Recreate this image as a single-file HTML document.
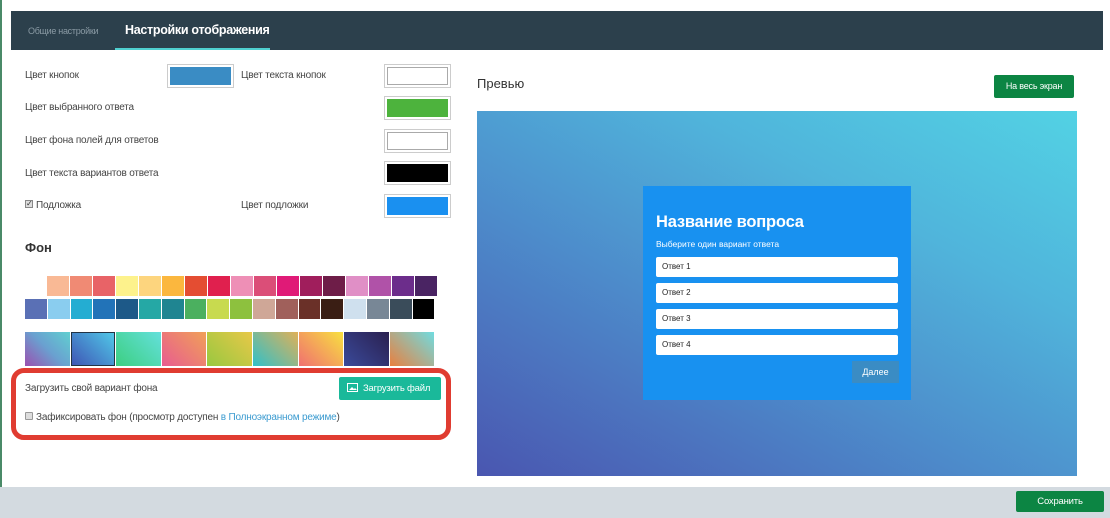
<!DOCTYPE html>
<html><head><meta charset="utf-8"><style>
*{box-sizing:border-box;margin:0;padding:0}
body{width:1110px;height:518px;background:#fff;font-family:"Liberation Sans",sans-serif;position:relative;overflow:hidden;color:#333}
.a{position:absolute}
.lbl{position:absolute;font-size:10px;color:#444;letter-spacing:-0.2px}
.sw{position:absolute;width:64px;height:24px;border:1px solid #ccc;padding:2px;background:#fff}
.sw div{width:100%;height:100%}
.row div{float:left;height:20px;margin-right:1px}
</style></head><body>
<div class="a" style="left:0;top:0;width:2px;height:490px;background:#4a8a68"></div>
<div class="a" style="left:11px;top:11px;width:1092px;height:39px;background:#2c404c"></div>
<div class="a" style="left:28px;top:26px;font-size:9px;color:#8a9aa4;letter-spacing:-0.3px">Общие настройки</div>
<div class="a" style="left:125px;top:23px;font-size:12.5px;font-weight:bold;color:#fff;letter-spacing:-0.3px">Настройки отображения</div>
<div class="a" style="left:115px;top:48px;width:155px;height:2px;background:#4fd0d0"></div>

<div class="lbl" style="left:25px;top:70px">Цвет кнопок</div>
<div class="sw" style="left:167px;top:64px;width:67px"><div style="background:#3a8cc4"></div></div>
<div class="lbl" style="left:241px;top:70px">Цвет текста кнопок</div>
<div class="sw" style="left:384px;top:64px;width:67px"><div style="background:#fff;border:1px solid #aaa"></div></div>
<div class="lbl" style="left:25px;top:102px">Цвет выбранного ответа</div>
<div class="sw" style="left:384px;top:96px;width:67px"><div style="background:#4db33d"></div></div>
<div class="lbl" style="left:25px;top:135px">Цвет фона полей для ответов</div>
<div class="sw" style="left:384px;top:129px;width:67px"><div style="background:#fff;border:1px solid #aaa"></div></div>
<div class="lbl" style="left:25px;top:168px">Цвет текста вариантов ответа</div>
<div class="sw" style="left:384px;top:161px;width:67px"><div style="background:#000"></div></div>
<div class="a" style="left:25px;top:200px;width:8px;height:8px;border:1px solid #888;background:#ddd;font-size:8px;line-height:6px;text-align:center">✓</div>
<div class="lbl" style="left:36px;top:200px">Подложка</div>
<div class="lbl" style="left:241px;top:200px">Цвет подложки</div>
<div class="sw" style="left:384px;top:194px;width:67px"><div style="background:#1a90f0"></div></div>

<div class="a" style="left:25px;top:240px;font-size:13px;font-weight:bold;color:#333">Фон</div>

<div class="a row" style="left:47px;top:276px;width:400px">
<div style="width:22px;background:#f9b995"></div><div style="width:22px;background:#f08a74"></div><div style="width:22px;background:#e86367"></div><div style="width:22px;background:#fdf28c"></div><div style="width:22px;background:#fdd57e"></div><div style="width:22px;background:#fbb73e"></div><div style="width:22px;background:#e44d32"></div><div style="width:22px;background:#e0204e"></div><div style="width:22px;background:#ee8fb6"></div><div style="width:22px;background:#db4e78"></div><div style="width:22px;background:#e01a77"></div><div style="width:22px;background:#a01e5c"></div><div style="width:22px;background:#6e1d48"></div><div style="width:22px;background:#e08fc6"></div><div style="width:22px;background:#b052a8"></div><div style="width:22px;background:#6c2d8b"></div><div style="width:22px;background:#4a2463"></div>
</div>
<div class="a row" style="left:25px;top:299px;width:430px">
<div style="width:21.8px;background:#5a70b5"></div><div style="width:21.8px;background:#8acdef"></div><div style="width:21.8px;background:#24add2"></div><div style="width:21.8px;background:#2273b8"></div><div style="width:21.8px;background:#1d5988"></div><div style="width:21.8px;background:#25a8a5"></div><div style="width:21.8px;background:#1f8591"></div><div style="width:21.8px;background:#4bb05f"></div><div style="width:21.8px;background:#c8da4f"></div><div style="width:21.8px;background:#8dc13e"></div><div style="width:21.8px;background:#cfa797"></div><div style="width:21.8px;background:#a0605b"></div><div style="width:21.8px;background:#6a3028"></div><div style="width:21.8px;background:#3a1e14"></div><div style="width:21.8px;background:#cfe0ee"></div><div style="width:21.8px;background:#788796"></div><div style="width:21.8px;background:#3a4c5a"></div><div style="width:21.8px;background:#000"></div>
</div>
<div class="a row" style="left:25px;top:332px;width:430px">
<div style="width:44.6px;height:34px;background:linear-gradient(45deg,#9b50b0,#6aa0d0,#60d0d0)"></div>
<div style="width:44.6px;height:34px;background:linear-gradient(45deg,#3f55b5,#50c8e8);border:1px solid #234"></div>
<div style="width:44.6px;height:34px;background:linear-gradient(45deg,#3ccf80,#64e0dc)"></div>
<div style="width:44.6px;height:34px;background:linear-gradient(45deg,#e85c90,#f0a058)"></div>
<div style="width:44.6px;height:34px;background:linear-gradient(45deg,#98c840,#e8c848)"></div>
<div style="width:44.6px;height:34px;background:linear-gradient(45deg,#30c0c8,#e0b058)"></div>
<div style="width:44.6px;height:34px;background:linear-gradient(45deg,#f07070,#f8e040)"></div>
<div style="width:44.6px;height:34px;background:linear-gradient(45deg,#3a4a9a,#2a2050)"></div>
<div style="width:44.6px;height:34px;background:linear-gradient(45deg,#e88040,#70dce0)"></div>
</div>

<div class="a" style="left:11px;top:368px;width:440px;height:72px;border:5px solid #e03c31;border-radius:13px"></div>
<div class="lbl" style="left:25px;top:383px">Загрузить свой вариант фона</div>
<div class="a" style="left:339px;top:377px;width:102px;height:23px;background:#1ab99a;border-radius:2px;color:#fff;font-size:9.5px;line-height:23px;padding-left:8px;letter-spacing:-0.2px">
<svg width="11" height="9" style="vertical-align:-1px;margin-right:5px"><rect x=".5" y=".5" width="10" height="8" fill="none" stroke="#fff"/><path d="M2 7l3-3 2 2 1-1 2 2z" fill="#fff"/></svg>Загрузить файл</div>
<div class="a" style="left:25px;top:412px;width:8px;height:8px;border:1px solid #999;background:#ddd;border-radius:1px"></div>
<div class="lbl" style="left:36px;top:412px">Зафиксировать фон (просмотр доступен <span style="color:#3b9bd0">в Полноэкранном режиме</span>)</div>

<div class="a" style="left:477px;top:76px;font-size:13px;color:#333">Превью</div>
<div class="a" style="left:994px;top:75px;width:80px;height:23px;background:#0c8543;border-radius:2px;color:#fff;font-size:9px;line-height:23px;text-align:center;letter-spacing:-0.2px">На весь экран</div>

<div class="a" style="left:477px;top:111px;width:600px;height:365px;background:linear-gradient(28deg,#4a56b0 0%,#4d8ccb 40%,#50b4db 70%,#52d2e4 100%)"></div>
<div class="a" style="left:643px;top:186px;width:268px;height:214px;background:#1891f0"></div>
<div class="a" style="left:656px;top:213px;font-size:16.5px;font-weight:bold;color:#fff;letter-spacing:-0.2px">Название вопроса</div>
<div class="a" style="left:656px;top:239px;font-size:8.5px;color:#fff">Выберите один вариант ответа</div>
<div class="a" style="left:656px;top:257px;width:242px;height:20px;background:#fff;border-radius:2px;font-size:8px;line-height:20px;padding-left:6px;color:#222">Ответ 1</div>
<div class="a" style="left:656px;top:283px;width:242px;height:20px;background:#fff;border-radius:2px;font-size:8px;line-height:20px;padding-left:6px;color:#222">Ответ 2</div>
<div class="a" style="left:656px;top:309px;width:242px;height:20px;background:#fff;border-radius:2px;font-size:8px;line-height:20px;padding-left:6px;color:#222">Ответ 3</div>
<div class="a" style="left:656px;top:335px;width:242px;height:20px;background:#fff;border-radius:2px;font-size:8px;line-height:20px;padding-left:6px;color:#222">Ответ 4</div>
<div class="a" style="left:852px;top:361px;width:47px;height:22px;background:#3a8cc4;color:#fff;font-size:9px;line-height:22px;text-align:center">Далее</div>

<div class="a" style="left:0;top:487px;width:1110px;height:31px;background:#d3dae0"></div>
<div class="a" style="left:1016px;top:491px;width:88px;height:21px;background:#0c8543;border-radius:2px;color:#fff;font-size:9.5px;line-height:21px;text-align:center;letter-spacing:-0.2px">Сохранить</div>
</body></html>
